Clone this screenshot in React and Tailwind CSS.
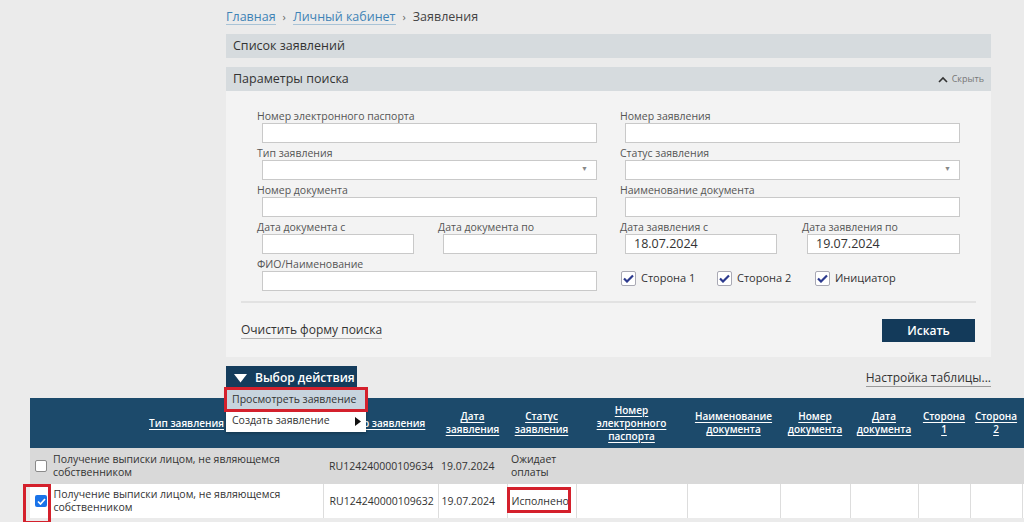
import React from 'react';

const font = { fontFamily: '"Open Sans", "Noto Sans", sans-serif' };

function Field({ label, value, select, className = '' }) {
  return (
    <div className={`flex flex-col ${className}`}>
      <div className="h-[17px] text-[10.5px] leading-[20px] text-[#555] whitespace-nowrap">{label}</div>
      <div className="ml-[5px] h-[20px] bg-white border border-[#c9c9c9] flex items-center px-[8px] text-[12.5px] text-[#333] relative">
        {value}
        {select && <span className="absolute right-[8px] top-[3px] text-[7px] text-[#888]">▼</span>}
      </div>
    </div>
  );
}

function Check({ label }) {
  return (
    <div className="flex items-center gap-[5px]">
      <div className="w-[15px] h-[15px] bg-white border border-[#a9a9b4] rounded-[2px] flex items-center justify-center">
        <svg width="11" height="9" viewBox="0 0 11 9">
          <path d="M1 4.5 L4 7.5 L10 1.5" fill="none" stroke="#2c3a8e" strokeWidth="2.2" />
        </svg>
      </div>
      <span className="text-[11px] text-[#333] whitespace-nowrap">{label}</span>
    </div>
  );
}

const cols = [
  { w: 20 },
  { w: 273, t: ['Тип заявления'] },
  { w: 115, t: ['Номер заявления'] },
  { w: 69, t: ['Дата', 'заявления'] },
  { w: 69, t: ['Статус', 'заявления'] },
  { w: 111, t: ['Номер', 'электронного', 'паспорта'] },
  { w: 93, t: ['Наименование', 'документа'] },
  { w: 70, t: ['Номер', 'документа'] },
  { w: 68, t: ['Дата', 'документа'] },
  { w: 52, t: ['Сторона', '1'] },
  { w: 52, t: ['Сторона', '2'] },
  { w: 60 },
];

const rows = [
  { checked: false, type: 'Получение выписки лицом, не являющемся собственником', num: 'RU124240000109634', date: '19.07.2024', status: 'Ожидает оплаты' },
  { checked: true, type: 'Получение выписки лицом, не являющемся собственником', num: 'RU124240000109632', date: '19.07.2024', status: 'Исполнено' },
];

export default function App() {
  return (
    <div className="w-[1024px] h-[522px] overflow-hidden bg-[#ebebeb] relative" style={font}>
      <div className="ml-[226px] w-[765px] pt-[8px]">
        {/* breadcrumb */}
        <div className="h-[18px] mb-[8px] flex items-center text-[12.5px]">
          <span className="text-[#3f83b6] border-b border-[#a9c3d6] leading-[14px]">Главная</span>
          <span className="mx-[7px] text-[#666] text-[11px]">›</span>
          <span className="text-[#3f83b6] border-b border-[#a9c3d6] leading-[14px]">Личный кабинет</span>
          <span className="mx-[7px] text-[#666] text-[11px]">›</span>
          <span className="text-[#444]">Заявления</span>
        </div>

        <div className="h-[24px] bg-[#d6dbde] flex items-center px-[7px] text-[12.5px] text-[#333]">Список заявлений</div>

        <div className="mt-[9px] h-[24px] bg-[#d6dbde] flex items-center justify-between px-[7px] text-[12.5px] text-[#333]">
          <span>Параметры поиска</span>
          <span className="flex items-center gap-[4px] text-[9px] text-[#777]">
            <svg width="10" height="7" viewBox="0 0 10 7">
              <path d="M1 6 L5 2 L9 6" fill="none" stroke="#333" strokeWidth="1.6" />
            </svg>
            Скрыть
          </span>
        </div>

        {/* form panel */}
        <div className="h-[266px] bg-[#f3f3f3] pt-[15px] flex flex-col">
          <div className="flex px-[31px] gap-[23px]">
            <div className="w-[340px] flex flex-col">
              <Field label="Номер электронного паспорта" />
              <Field label="Тип заявления" select />
              <Field label="Номер документа" />
              <div className="flex gap-[24px]">
                <Field label="Дата документа с" className="w-[157px]" />
                <Field label="Дата документа по" className="w-[159px]" />
              </div>
              <Field label="ФИО/Наименование" />
            </div>
            <div className="w-[340px] flex flex-col">
              <Field label="Номер заявления" />
              <Field label="Статус заявления" select />
              <Field label="Наименование документа" />
              <div className="flex gap-[25px]">
                <Field label="Дата заявления с" value="18.07.2024" className="w-[157px]" />
                <Field label="Дата заявления по" value="19.07.2024" className="w-[158px]" />
              </div>
              <div className="mt-[16px] ml-[1px] flex items-center">
                <div className="w-[96px]"><Check label="Сторона 1" /></div>
                <div className="w-[98px]"><Check label="Сторона 2" /></div>
                <Check label="Инициатор" />
              </div>
            </div>
          </div>
          <div className="mt-[10px] mx-[15px] h-[2px] bg-[#e2e2e2]" />
          <div className="mt-[16px] flex items-center justify-between pl-[15px] pr-[16px]">
            <span className="text-[12px] text-[#333] border-b border-[#b5b5b5] leading-[16px]">Очистить форму поиска</span>
            <div className="w-[93px] h-[23px] bg-[#133a5a] text-white text-[12px] font-semibold flex items-center justify-center">Искать</div>
          </div>
        </div>

        {/* action row */}
        <div className="mt-[9px] h-[24px] flex items-center justify-between relative">
          <div className="h-[24px] w-[131px] bg-[#143c5c] text-white text-[12px] font-semibold flex items-center pl-[8px] gap-[8px] whitespace-nowrap">
            <svg width="13" height="9" viewBox="0 0 13 9"><path d="M0 0 H13 L6.5 8.5 Z" fill="#fff" /></svg>
            Выбор действия
          </div>
          <span className="text-[12px] text-[#333] border-b border-[#9a9a9a] leading-[16px]">Настройка таблицы...</span>

          {/* dropdown menu */}
          <div className="absolute left-[0px] top-[23px] w-[140px] bg-white shadow-[0_1px_3px_rgba(0,0,0,0.3)] z-10 text-[10.5px] text-[#333] whitespace-nowrap">
            <div className="h-[21px] bg-[#c7d4de] flex items-center pl-[6px] outline outline-[3px] outline-[#d4202c] -outline-offset-1">Просмотреть заявление</div>
            <div className="h-[22px] flex items-center justify-between pl-[6px] pr-[5px]">
              Создать заявление
              <svg width="6" height="9" viewBox="0 0 6 9"><path d="M0 0 L6 4.5 L0 9 Z" fill="#111" /></svg>
            </div>
          </div>
        </div>
      </div>

      {/* table */}
      <div className="mt-[8px] ml-[30px] relative">
        <table className="table-fixed border-collapse" style={{ width: cols.reduce((a, c) => a + c.w, 0) }}>
          <colgroup>
            {cols.map((c, i) => <col key={i} style={{ width: c.w }} />)}
          </colgroup>
          <thead>
            <tr className="h-[50px] bg-[#1c4a6b]">
              {cols.map((c, i) => (
                <th key={i} className="px-[2px] align-middle text-center font-semibold text-white leading-[13px] text-[10px]">
                  {c.t && c.t.map((line, j) => (
                    <div key={j}><span className="underline underline-offset-2">{line}</span></div>
                  ))}
                </th>
              ))}
            </tr>
          </thead>
          <tbody className="text-[#333] leading-[13px] text-[10.5px]">
            {rows.map((r, i) => (
              <tr key={i} className={i === 0 ? 'h-[36px] bg-[#d9d9d9]' : 'h-[34px] bg-white'}>
                <td className={`pl-[5px] ${i === 1 ? 'border-r border-[#ddd]' : ''}`}>
                  {r.checked ? (
                    <div className="w-[12px] h-[12px] rounded-[2px] bg-[#1a73e8] flex items-center justify-center">
                      <svg width="9" height="7" viewBox="0 0 9 7"><path d="M1 3.5 L3.5 6 L8 1" fill="none" stroke="#fff" strokeWidth="1.7" /></svg>
                    </div>
                  ) : (
                    <div className="w-[12px] h-[12px] rounded-[2px] bg-white border border-[#8a8a8a]" />
                  )}
                </td>
                <td className={`pl-[3px] pr-[20px] ${i === 1 ? 'border-r border-[#ddd]' : ''}`}>{r.type}</td>
                <td className={`pl-[6px] whitespace-nowrap ${i === 1 ? 'border-r border-[#ddd]' : ''}`}>{r.num}</td>
                <td className={`pl-[3px] ${i === 1 ? 'border-r border-[#ddd]' : ''}`}>{r.date}</td>
                <td className={`pl-[4px] ${i === 1 ? 'border-r border-[#ddd]' : ''}`}>{r.status}</td>
                {cols.slice(5).map((c, j) => (
                  <td key={j} className={i === 1 ? 'border-r border-[#ddd]' : ''} />
                ))}
              </tr>
            ))}
          </tbody>
        </table>

        {/* highlight boxes */}
        <div className="absolute left-[-7px] top-[86px] w-[28px] h-[40px] border-[3px] border-[#d4202c]" />
        <div className="absolute left-[477px] top-[89px] w-[64px] h-[26px] border-[3px] border-[#d4202c]" />
      </div>
    </div>
  );
}
